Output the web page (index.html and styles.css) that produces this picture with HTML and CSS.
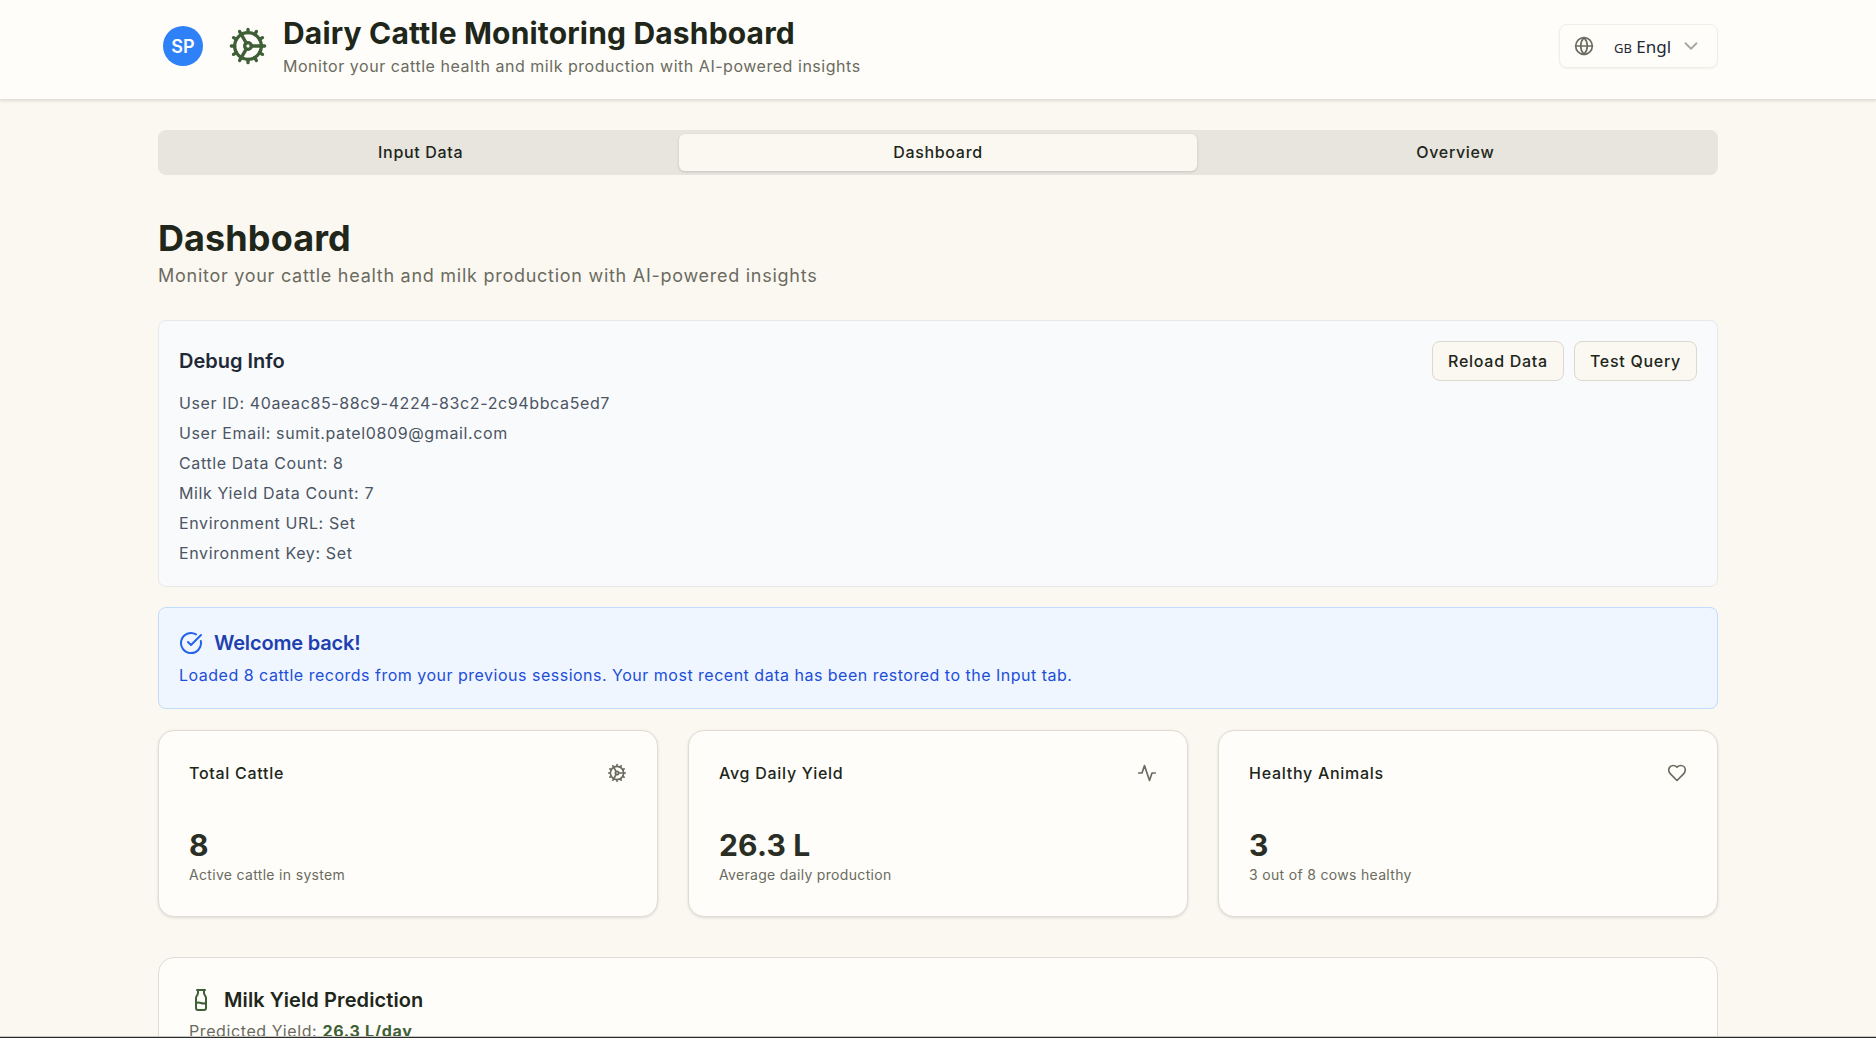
FILE: index.html
```html
<!DOCTYPE html>
<html lang="en">
<head>
<meta charset="utf-8">
<title>Dairy Cattle Monitoring Dashboard</title>
<link rel="stylesheet" href="styles.css">
</head>
<body>
<header class="topbar">
  <div class="topbar-inner">
    <div class="brand">
      <div class="avatar">SP</div>
      <svg class="icon brand-icon" viewBox="0 0 24 24"><path d="M12 20a8 8 0 1 0 0-16 8 8 0 0 0 0 16Z"/><path d="M12 14a2 2 0 1 0 0-4 2 2 0 0 0 0 4Z"/><path d="M12 2v2M12 22v-2M17 20.66l-1-1.73M11 10.27 7 3.34M20.66 17l-1.73-1M3.34 7l1.73 1M14 12h8M2 12h2M20.66 7l-1.73 1M3.34 17l1.73-1M17 3.34l-1 1.73M11 13.73l-4 6.93"/></svg>
      <div class="brand-text">
        <h1 class="app-title">Dairy Cattle Monitoring Dashboard</h1>
        <p class="app-sub">Monitor your cattle health and milk production with AI-powered insights</p>
      </div>
    </div>
    <div class="lang">
      <svg class="icon lang-globe" viewBox="0 0 24 24"><circle cx="12" cy="12" r="10"/><path d="M12 2a14.5 14.5 0 0 0 0 20 14.5 14.5 0 0 0 0-20"/><path d="M2 12h20"/></svg>
      <span class="lang-text"><span class="lang-code">GB</span> Engl</span>
      <svg class="icon lang-chev" viewBox="0 0 24 24"><path d="m6 9 6 6 6-6"/></svg>
    </div>
  </div>
</header>

<main class="page">
  <nav class="tabs">
    <div class="tab">Input Data</div>
    <div class="tab tab-active">Dashboard</div>
    <div class="tab">Overview</div>
  </nav>

  <section class="intro">
    <h2 class="page-title">Dashboard</h2>
    <p class="page-sub">Monitor your cattle health and milk production with AI-powered insights</p>
  </section>

  <section class="debug">
    <div class="debug-head">
      <h3 class="debug-title">Debug Info</h3>
      <div class="debug-actions">
        <button class="btn">Reload Data</button>
        <button class="btn">Test Query</button>
      </div>
    </div>
    <div class="debug-lines">
      <p>User ID: 40aeac85-88c9-4224-83c2-2c94bbca5ed7</p>
      <p>User Email: sumit.patel0809@gmail.com</p>
      <p>Cattle Data Count: 8</p>
      <p>Milk Yield Data Count: 7</p>
      <p>Environment URL: Set</p>
      <p>Environment Key: Set</p>
    </div>
  </section>

  <section class="welcome">
    <div class="welcome-head">
      <svg class="icon welcome-icon" viewBox="0 0 24 24"><path d="M21.801 10A10 10 0 1 1 17 3.335"/><path d="m9 11 3 3L22 4"/></svg>
      <h3 class="welcome-title">Welcome back!</h3>
    </div>
    <p class="welcome-text">Loaded 8 cattle records from your previous sessions. Your most recent data has been restored to the Input tab.</p>
  </section>

  <section class="stats">
    <article class="stat">
      <div class="stat-head">
        <span class="stat-label">Total Cattle</span>
        <svg class="icon stat-icon" viewBox="0 0 24 24"><path d="M12 20a8 8 0 1 0 0-16 8 8 0 0 0 0 16Z"/><path d="M12 14a2 2 0 1 0 0-4 2 2 0 0 0 0 4Z"/><path d="M12 2v2M12 22v-2M17 20.66l-1-1.73M11 10.27 7 3.34M20.66 17l-1.73-1M3.34 7l1.73 1M14 12h8M2 12h2M20.66 7l-1.73 1M3.34 17l1.73-1M17 3.34l-1 1.73M11 13.73l-4 6.93"/></svg>
      </div>
      <div class="stat-value">8</div>
      <div class="stat-note">Active cattle in system</div>
    </article>
    <article class="stat">
      <div class="stat-head">
        <span class="stat-label">Avg Daily Yield</span>
        <svg class="icon stat-icon" viewBox="0 0 24 24"><path d="M22 12h-4l-3 9L9 3l-3 9H2"/></svg>
      </div>
      <div class="stat-value">26.3 L</div>
      <div class="stat-note">Average daily production</div>
    </article>
    <article class="stat">
      <div class="stat-head">
        <span class="stat-label">Healthy Animals</span>
        <svg class="icon stat-icon" viewBox="0 0 24 24"><path d="M19 14c1.49-1.46 3-3.21 3-5.5A5.5 5.5 0 0 0 16.5 3c-1.76 0-3 .5-4.5 2-1.5-1.5-2.74-2-4.5-2A5.5 5.5 0 0 0 2 8.5c0 2.3 1.5 4.05 3 5.5l7 7Z"/></svg>
      </div>
      <div class="stat-value">3</div>
      <div class="stat-note">3 out of 8 cows healthy</div>
    </article>
  </section>

  <section class="predict">
    <div class="predict-head">
      <svg class="icon predict-icon" viewBox="0 0 24 24"><path d="M8 2h8"/><path d="M9 2v2.789a4 4 0 0 1-.672 2.219l-.656.984A4 4 0 0 0 7 10.212V20a2 2 0 0 0 2 2h6a2 2 0 0 0 2-2v-9.789a4 4 0 0 0-.672-2.219l-.656-.984A4 4 0 0 1 15 4.788V2"/><path d="M7 15a6.472 6.472 0 0 1 5 0 6.47 6.47 0 0 0 5 0"/></svg>
      <h3 class="predict-title">Milk Yield Prediction</h3>
    </div>
    <p class="predict-line">Predicted Yield: <strong class="predict-value">26.3 L/day</strong></p>
  </section>
</main>
<div class="window-edge"></div>
</body>
</html>
```

FILE: styles.css
```css
* { box-sizing: border-box; }
html, body { height: 100%; overflow: hidden; }
body {
  margin: 0;
  background: #fbf8f2;
  color: #20261a;
  font-family: Inter, "Liberation Sans", sans-serif;
}
h1, h2, h3, p { margin: 0; }
.icon { fill: none; stroke: currentColor; stroke-width: 2; stroke-linecap: round; stroke-linejoin: round; flex: none; display: block; }

.topbar {
  height: 100px;
  background: #fefdf9;
  border-bottom: 1px solid #e4e0d8;
  box-shadow: 0 1px 3px rgba(0,0,0,.12);
  padding: 0 158px 7px;
}
.topbar-inner { height: 92px; display: flex; align-items: center; justify-content: space-between; }
.brand { display: flex; align-items: center; padding-left: 5px; }
.avatar {
  width: 40px; height: 40px; border-radius: 50%;
  background: #2f81f7; color: #fff;
  display: flex; align-items: center; justify-content: center;
  font-size: 18px; font-weight: 600;
}
.brand-icon { width: 40px; height: 40px; margin: 0 15px 0 25px; color: #3f5f37; }
.app-title { font-size: 30px; line-height: 36px; font-weight: 700; letter-spacing: .17px; color: #20261a; }
.app-sub { font-size: 16px; line-height: 24px; letter-spacing: .53px; color: #6b6b60; margin-top: 3px; }

.lang {
  width: 159px; height: 44px;
  display: flex; align-items: center;
  background: #fefdf9;
  border: 1px solid #f1eee8; border-radius: 8px;
  box-shadow: 0 1px 2px rgba(0,0,0,.05);
  padding: 0 12px 0 14px;
}
.lang-globe { width: 20px; height: 20px; color: #6b6b60; }
.lang-text { margin-left: 20px; font-size: 17px; color: #1f2937; white-space: nowrap; width: 62px; font-family: "Noto Sans", sans-serif; }
.lang-code { font-size: 13px; }
.lang-chev { width: 22px; height: 22px; margin-left: 4px; color: #a8a8a0; }

.page { width: 1560px; margin: 0 auto; padding-top: 30px; }

.tabs {
  height: 45px; background: #e8e4de; border-radius: 8px;
  display: grid; grid-template-columns: repeat(3, 1fr);
  padding: 4px;
}
.tab { display: flex; align-items: center; justify-content: center; font-size: 16px; font-weight: 500; letter-spacing: .68px; border-radius: 6px; color: #20261a; padding-bottom: 1px; }
.tab-active { background: #fbf8f2; box-shadow: 0 1px 3px rgba(0,0,0,.15); }

.intro { margin-top: 41px; }
.page-title { font-size: 36px; line-height: 44px; font-weight: 700; letter-spacing: .1px; color: #20261a; }
.page-sub { font-size: 18px; line-height: 28px; letter-spacing: .73px; color: #6b6b60; margin-top: 2px; }

.debug {
  margin-top: 30px; height: 267px;
  background: #f9fafc;
  border: 1px solid #e7e8ea; border-radius: 8px;
  padding: 20px;
}
.debug-head { display: flex; align-items: center; justify-content: space-between; height: 40px; }
.debug-title { font-size: 20px; font-weight: 600; color: #1f2937; }
.debug-actions { display: flex; gap: 10px; }
.btn {
  height: 40px; padding: 0 15px;
  background: #fbf8f2; border: 1px solid #dcd8cf; border-radius: 8px;
  font: 500 16px Inter, "Liberation Sans", sans-serif; letter-spacing: .72px; color: #20261a;
}
.debug-lines { margin-top: 7px; font-size: 16px; line-height: 30px; letter-spacing: .62px; color: #4b5563; }

.welcome {
  margin-top: 20px; height: 102px;
  background: #eff6ff;
  border: 1px solid #bfdbfe; border-radius: 8px;
  padding: 20px;
}
.welcome-head { display: flex; align-items: center; gap: 11px; height: 28px; margin-top: 1px; }
.welcome-icon { width: 24px; height: 24px; color: #2563eb; }
.welcome-title { font-size: 20px; font-weight: 600; letter-spacing: -.18px; color: #1e40af; }
.welcome-text { font-size: 16px; line-height: 24px; letter-spacing: .5px; color: #1d4ed8; margin-top: 6px; }

.stats { margin-top: 21px; display: grid; grid-template-columns: repeat(3, 500px); gap: 30px; }
.stat {
  height: 187px; padding: 30px;
  background: #fefdf9;
  border: 1px solid #e0dcd4; border-radius: 16px;
  box-shadow: 0 1px 3px rgba(0,0,0,.12);
}
.stat-head { display: flex; align-items: center; justify-content: space-between; height: 24px; }
.stat-label { font-size: 16px; font-weight: 500; letter-spacing: .72px; color: #20261a; }
.stat-icon { width: 20px; height: 20px; color: #6b6b60; }
.stat-value { margin-top: 41px; font-size: 30px; line-height: 38px; font-weight: 700; letter-spacing: .2px; color: #2a2e25; }
.stat-note { font-size: 14px; line-height: 20px; letter-spacing: .32px; color: #6b6b60; margin-top: 1px; }

.predict {
  margin-top: 40px; height: 300px;
  background: #fefdf9;
  border: 1px solid #e0dcd4; border-radius: 16px;
  padding: 30px;
}
.predict-head { display: flex; align-items: center; gap: 11px; height: 24px; }
.predict-icon { width: 24px; height: 24px; color: #3f5f37; }
.predict-title { font-size: 20px; font-weight: 600; letter-spacing: .1px; color: #20261a; }
.predict-line { font-size: 16px; line-height: 24px; letter-spacing: .6px; color: #6b6b60; margin-top: 7px; }
.predict-value { color: #3f5f37; font-weight: 700; letter-spacing: .7px; }

.window-edge { position: fixed; left: 0; right: 0; bottom: 0; height: 2px; background: #2a2a2a; border-top: 1px solid #c9c6bf; }
```
